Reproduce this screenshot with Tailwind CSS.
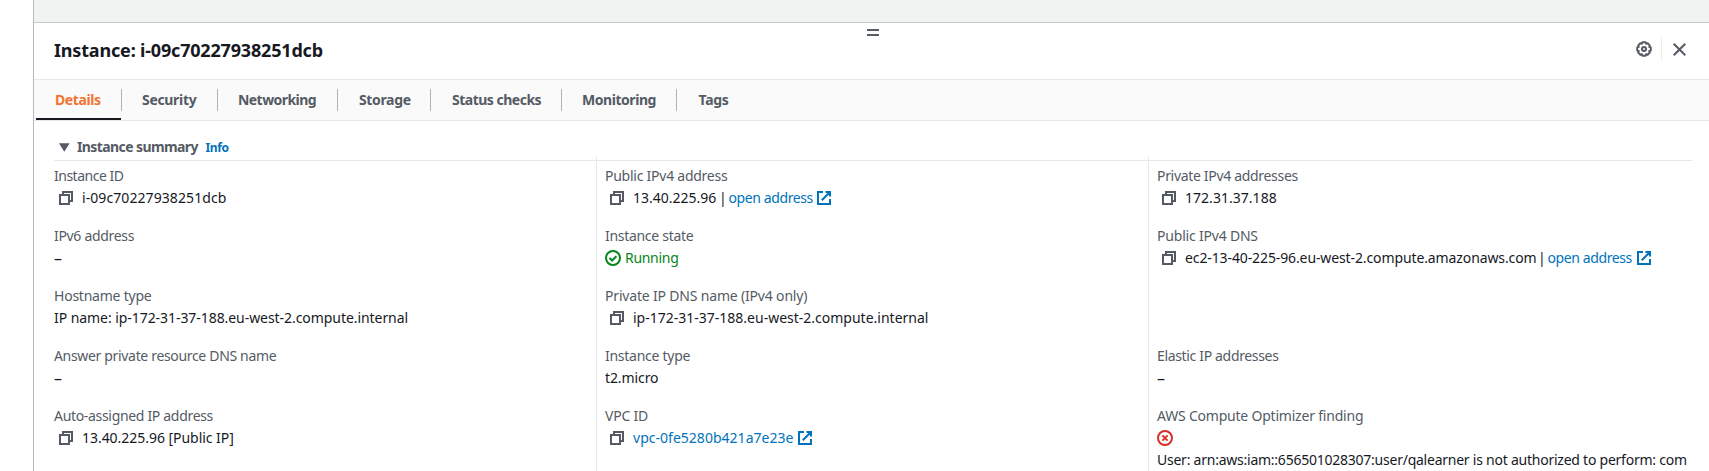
<!DOCTYPE html>
<html lang="en">
<head>
<meta charset="utf-8">
<title>Instance details</title>
<script src="https://cdn.jsdelivr.net/npm/@tailwindcss/browser@4"></script>
</head>
<body class="h-[471px] overflow-hidden bg-white font-['Noto_Sans',sans-serif] text-sm leading-[22px] text-[#16191f]">
<svg class="hidden">
  <symbol id="copy" viewBox="0 0 14 14"><path d="M1 4h9v9H1zM4 4V1h9v9h-3" fill="none" stroke="currentColor" stroke-width="2"/></symbol>
  <symbol id="ext" viewBox="0 0 14 14"><path d="M6 1H1v12h12V8M8.5 1H13v4.5M13 1L4.8 9.2" fill="none" stroke="currentColor" stroke-width="2"/></symbol>
</svg>
<div class="ml-[33px] h-[471px] border-l border-[#b3babc] whitespace-nowrap">
  <div class="h-[23px] border-b border-[#c3cccd] bg-[#f1f3f3]"></div>

  <header class="relative flex h-14 items-start pl-5">
    <h2 class="mt-[14px] text-lg leading-[26px] font-bold tracking-[-0.18px]">Instance: i-09c70227938251dcb</h2>
    <div class="absolute top-[6px] left-[833px] h-[7px] w-3 border-y-2 border-[#545b64]"></div>
    <div class="mt-[14px] mr-[23px] ml-auto flex items-center text-[#545b64]">
      <svg class="mr-[9px] h-4 w-4" viewBox="0 0 16 16" fill="none" stroke="currentColor" stroke-width="2" stroke-linejoin="round"><path d="M6.4 1.2h3.2l.5 1.5 1.5-.5 2.2 2.2-.6 1.5 1.6.6v3l-1.6.6.6 1.5-2.2 2.2-1.5-.5-.5 1.5H6.4l-.5-1.5-1.5.5-2.2-2.2.6-1.5-1.6-.6v-3l1.6-.6-.6-1.5 2.2-2.2 1.5.5z"/><circle cx="8" cy="8" r="2"/></svg>
      <span class="mr-[11px] h-6 w-px bg-[#eaeded]"></span>
      <svg class="h-[13px] w-[13px]" viewBox="0 0 13 13" fill="none" stroke="currentColor" stroke-width="2"><path d="M.7.7l11.6 11.6M12.3.7L.7 12.3"/></svg>
    </div>
  </header>

  <nav class="flex h-[42px] items-start border-y border-[#e6e9e9] bg-[#fafafa] pl-[2px] font-bold text-[#545b64]">
    <div class="flex h-10 w-[85px] border-b-2 border-[#16191f] pt-[9px] pl-[19px] tracking-[-0.4px] text-[#f27430]">Details</div>
    <div class="mt-[9px] h-[22px] w-24 border-l border-[#aab7b8] pl-5 tracking-[-0.32px]">Security</div>
    <div class="mt-[9px] h-[22px] w-[120px] border-l border-[#aab7b8] pl-5 tracking-[-0.56px]">Networking</div>
    <div class="mt-[9px] h-[22px] w-[93px] border-l border-[#aab7b8] pl-[21px] tracking-[-0.35px]">Storage</div>
    <div class="mt-[9px] h-[22px] w-[131px] border-l border-[#aab7b8] pl-[21px] tracking-[-0.5px]">Status checks</div>
    <div class="mt-[9px] h-[22px] w-[115px] border-l border-[#aab7b8] pl-5 tracking-[-0.45px]">Monitoring</div>
    <div class="mt-[9px] h-[22px] border-l border-[#aab7b8] pl-[21.5px] tracking-[-0.3px]">Tags</div>
  </nav>

  <section class="pr-[17px] pl-5">
    <div class="flex h-10 items-baseline border-b border-[#e6e9e9] pt-[15px] pl-[5px] font-bold">
      <svg class="h-[9px] w-[11px]" viewBox="0 0 11 9"><path d="M0 .2h10.6L5.3 8.8z" fill="#545b64"/></svg>
      <h3 class="ml-[7px] w-[128.5px] tracking-[-0.6px] text-[#545b64]">Instance summary</h3>
      <a class="text-xs tracking-[-0.4px] text-[#0073bb]">Info</a>
    </div>
    <div class="-mt-1 flex h-[330px]">
      <div class="w-[542px] space-y-4 pt-[8px]">
        <div><div class="tracking-[-0.5px] text-[#545b64]">Instance ID</div><div class="flex items-center"><svg class="mr-[9px] ml-[5px] h-[14px] w-[14px] text-[#545b64]"><use href="#copy"/></svg><span class="tracking-[0.08px]">i-09c70227938251dcb</span></div></div>
        <div><div class="tracking-[-0.32px] text-[#545b64]">IPv6 address</div><div class="h-[22px] text-base leading-[22px]">–</div></div>
        <div><div class="tracking-[-0.23px] text-[#545b64]">Hostname type</div><div class="tracking-[-0.06px]">IP name: ip-172-31-37-188.eu-west-2.compute.internal</div></div>
        <div><div class="tracking-[-0.33px] text-[#545b64]">Answer private resource DNS name</div><div class="h-[22px] text-base leading-[22px]">–</div></div>
        <div><div class="tracking-[-0.32px] text-[#545b64]">Auto-assigned IP address</div><div class="flex items-center"><svg class="mr-[9px] ml-[5px] h-[14px] w-[14px] text-[#545b64]"><use href="#copy"/></svg><span class="tracking-[-0.04px]">13.40.225.96 [Public IP]</span></div></div>
      </div>
      <div class="w-[552px] space-y-4 border-l border-[#e6e9e9] pt-[8px] pl-2">
        <div><div class="tracking-[-0.25px] text-[#545b64]">Public IPv4 address</div><div class="flex items-center"><svg class="mr-[9px] ml-[5px] h-[14px] w-[14px] text-[#545b64]"><use href="#copy"/></svg><span class="w-[86px]">13.40.225.96</span><span class="w-[9.5px]">|</span><a class="w-[88.5px] tracking-[-0.4px] text-[#0073bb]">open address</a><svg class="h-[14px] w-[14px] text-[#0073bb]"><use href="#ext"/></svg></div></div>
        <div><div class="tracking-[-0.3px] text-[#545b64]">Instance state</div><div class="flex items-center text-[#068520]"><svg class="mr-1 h-4 w-4" viewBox="0 0 16 16" fill="none" stroke="currentColor" stroke-width="2"><circle cx="8" cy="8" r="7"/><path d="M4.6 8l2.5 2.5 4.3-4.3"/></svg><span class="tracking-[-0.3px]">Running</span></div></div>
        <div><div class="tracking-[-0.18px] text-[#545b64]">Private IP DNS name (IPv4 only)</div><div class="flex items-center"><svg class="mr-[9px] ml-[5px] h-[14px] w-[14px] text-[#545b64]"><use href="#copy"/></svg><span>ip-172-31-37-188.eu-west-2.compute.internal</span></div></div>
        <div><div class="tracking-[-0.27px] text-[#545b64]">Instance type</div><div class="tracking-[-0.1px]">t2.micro</div></div>
        <div><div class="tracking-[-0.2px] text-[#545b64]">VPC ID</div><div class="flex items-center"><svg class="mr-[9px] ml-[5px] h-[14px] w-[14px] text-[#545b64]"><use href="#copy"/></svg><a class="w-[165px] tracking-[0.02px] text-[#0073bb]">vpc-0fe5280b421a7e23e</a><svg class="h-[14px] w-[14px] text-[#0073bb]"><use href="#ext"/></svg></div></div>
      </div>
      <div class="min-w-0 flex-1 border-l border-[#e6e9e9] pt-[8px] pl-2">
        <div class="h-[60px]"><div class="tracking-[-0.32px] text-[#545b64]">Private IPv4 addresses</div><div class="flex items-center"><svg class="mr-[9px] ml-[5px] h-[14px] w-[14px] text-[#545b64]"><use href="#copy"/></svg><span class="tracking-[0.03px]">172.31.37.188</span></div></div>
        <div class="h-[120px]"><div class="tracking-[-0.2px] text-[#545b64]">Public IPv4 DNS</div><div class="flex items-center"><svg class="mr-[9px] ml-[5px] h-[14px] w-[14px] text-[#545b64]"><use href="#copy"/></svg><span class="w-[353px] tracking-[-0.11px]">ec2-13-40-225-96.eu-west-2.compute.amazonaws.com</span><span class="w-[9.5px]">|</span><a class="w-[89.5px] tracking-[-0.4px] text-[#0073bb]">open address</a><svg class="h-[14px] w-[14px] text-[#0073bb]"><use href="#ext"/></svg></div></div>
        <div class="h-[60px]"><div class="tracking-[-0.34px] text-[#545b64]">Elastic IP addresses</div><div class="h-[22px] text-base leading-[22px]">–</div></div>
        <div><div class="tracking-[-0.21px] text-[#545b64]">AWS Compute Optimizer finding</div><div class="flex h-[22px] items-center"><svg class="h-4 w-4 text-[#d93025]" viewBox="0 0 16 16" fill="none" stroke="currentColor" stroke-width="2"><circle cx="8" cy="8" r="7"/><path d="M5.4 5.4l5.2 5.2M10.6 5.4l-5.2 5.2"/></svg></div><div class="tracking-[-0.24px]">User: arn:aws:iam::656501028307:user/qalearner is not authorized to perform: com</div></div>
      </div>
    </div>
  </section>
</div>
</body>
</html>
